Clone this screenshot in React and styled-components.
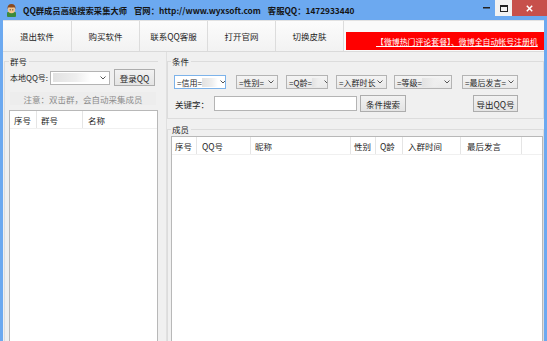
import React from 'react';
import styled, {createGlobalStyle} from 'styled-components';

const GlobalStyle = createGlobalStyle`
  html, body { margin: 0; padding: 0; overflow: hidden; background: #f0f0f0; }
  body {
    font-family: "Noto Sans CJK SC", "Microsoft YaHei", sans-serif;
    font-size: 8.5px;
    color: #1e1e1e;
  }
`;

const Window = styled.div`
  width: 547px;
  height: 360px;
  display: flex;
  flex-direction: column;
  background: #6ca9f0;
  overflow: hidden;
`;

const TitleBar = styled.div`
  height: 20px;
  display: flex;
  align-items: flex-start;
  flex: none;
`;

const TitleIcon = styled.svg`
  width: 13px;
  height: 14px;
  margin: 3px 0 0 5px;
`;

const TitleText = styled.div`
  display: flex;
  height: 20px;
  align-items: center;
  margin-left: 5px;
  font-size: 8.3px;
  font-weight: bold;
  color: #151515;
  white-space: nowrap;
  span + span { margin-left: ${p => p.gap || 6}px; }
`;

const Spacer = styled.div`
  flex: 1;
`;

const CtrlButton = styled.div`
  width: ${p => p.w}px;
  height: 16px;
  display: flex;
  align-items: center;
  justify-content: center;
  background: ${p => p.bg || 'transparent'};
  color: ${p => p.fg || '#222'};
`;

const Frame = styled.div`
  flex: 1;
  display: flex;
  flex-direction: column;
  border-left: 3px solid #6ca9f0;
  border-right: 3px solid #6ca9f0;
  background: #f0f0f0;
  min-height: 0;
`;

const Toolbar = styled.div`
  height: 32px;
  display: flex;
  flex: none;
  border-top: 1px solid #e2e2e2;
  border-bottom: 1px solid #dadada;
  box-sizing: border-box;
  background: #fafafa;
`;

const ToolButton = styled.div`
  width: ${p => p.w}px;
  flex: none;
  display: flex;
  align-items: center;
  justify-content: center;
  border-right: 1px solid #dcdcdc;
  box-sizing: border-box;
  background: linear-gradient(#fcfcfc, #f2f2f2);
  font-size: 8.5px;
`;

const Banner = styled.div`
  flex: 1;
  margin: 11px 0 0 2px;
  height: 18px;
  background: #ff0000;
  display: flex;
  align-items: center;
  padding-left: 30px;
  overflow: hidden;
  white-space: nowrap;
  color: #fff;
  text-decoration: underline;
  font-size: 7.9px;
`;

const Main = styled.div`
  flex: 1;
  display: flex;
  min-height: 0;
`;

const LeftCol = styled.div`
  width: 155px;
  flex: none;
  display: flex;
  flex-direction: column;
  padding: 3px 0 0 1px;
  box-sizing: border-box;
`;

const Splitter = styled.div`
  width: 9px;
  flex: none;
  border-right: 1px solid #e0e0e0;
  box-sizing: border-box;
`;

const RightCol = styled.div`
  flex: 1;
  display: flex;
  flex-direction: column;
  padding: 3px 0 0 0;
  min-width: 0;
`;

const Group = styled.div`
  display: flex;
  flex-direction: column;
  flex: ${p => (p.grow ? 1 : 'none')};
  margin-top: ${p => p.mt || 0}px;
  min-height: 0;
`;

const GroupHead = styled.div`
  height: 12px;
  display: flex;
  align-items: center;
  line-height: 12px;
  &::before {
    content: '';
    width: ${p => p.indent}px;
    height: 6px;
    align-self: flex-end;
    border-top: 1px solid #dcdcdc;
    border-left: 1px solid #dcdcdc;
    box-sizing: border-box;
    margin-right: 1px;
  }
  &::after {
    content: '';
    flex: 1;
    height: 6px;
    align-self: flex-end;
    border-top: 1px solid #dcdcdc;
    border-right: ${p => (p.noRight ? 'none' : '1px solid #dcdcdc')};
    box-sizing: border-box;
    margin-left: 2px;
  }
`;

const GroupBody = styled.div`
  flex: 1;
  display: flex;
  flex-direction: column;
  border: 1px solid #dcdcdc;
  border-top: none;
  border-right: ${p => (p.noRight ? 'none' : '1px solid #dcdcdc')};
  padding: ${p => p.pad};
  min-height: 0;
`;

const Row = styled.div`
  display: flex;
  align-items: center;
  height: ${p => p.h}px;
  margin-top: ${p => p.mt || 0}px;
  flex: none;
`;

const Label = styled.span`
  margin-left: ${p => p.ml || 0}px;
  width: ${p => (p.w ? p.w + 'px' : 'auto')};
  flex: none;
  white-space: nowrap;
  font-size: ${p => p.size || 8.5}px;
`;

const Select = styled.div`
  width: ${p => p.w}px;
  height: ${p => p.h || 14}px;
  margin-left: ${p => p.ml || 0}px;
  flex: none;
  display: flex;
  align-items: center;
  box-sizing: border-box;
  border: 1px solid ${p => (p.focus ? '#7db3ea' : '#b4b4b4')};
  background: ${p => (p.plain ? '#fff' : 'linear-gradient(#f4f4f4, #e8e8e8)')};
  padding: 0 3px 0 2px;
  overflow: hidden;
  white-space: nowrap;
  font-size: 8px;
`;

const Blur = styled.span`
  width: ${p => p.w}px;
  height: 9px;
  flex: none;
  background: linear-gradient(to right, #e2e2e2, #eeeeee 60%, rgba(255, 255, 255, 0));
`;

const Chevron = styled.svg`
  width: 6px;
  height: 4px;
  margin-left: auto;
  padding-left: 2px;
  flex: none;
`;

const Button = styled.div`
  width: ${p => p.w}px;
  height: ${p => p.h}px;
  margin-left: ${p => p.ml || 0}px;
  flex: none;
  display: flex;
  align-items: center;
  justify-content: center;
  box-sizing: border-box;
  border: 1px solid #adadad;
  background: linear-gradient(#f2f2f2, #e4e4e4);
  white-space: nowrap;
`;

const TextInput = styled.div`
  width: ${p => p.w}px;
  height: 15px;
  margin-left: ${p => p.ml || 0}px;
  flex: none;
  box-sizing: border-box;
  border: 1px solid #b4b4b4;
  background: #fff;
`;

const Note = styled.div`
  height: 13px;
  margin: 6px 2px 0 1px;
  display: flex;
  align-items: center;
  justify-content: center;
  color: #8c8c8c;
  background: #ededed;
  flex: none;
`;

const ListView = styled.div`
  flex: 1;
  margin-top: ${p => p.mt || 0}px;
  border: 1px solid #b8b8b8;
  background: #fff;
  display: flex;
  flex-direction: column;
  min-height: 0;
`;

const HeaderRow = styled.div`
  height: 17px;
  display: flex;
  flex: none;
  border-bottom: 1px solid #f0f0f0;
`;

const HeaderCell = styled.div`
  width: ${p => (p.w ? p.w + 'px' : 'auto')};
  flex: ${p => (p.w ? 'none' : 1)};
  display: flex;
  align-items: center;
  padding-left: ${p => p.pl || 4}px;
  box-sizing: border-box;
  border-right: ${p => (p.w ? '1px solid #e5e5e5' : 'none')};
  white-space: nowrap;
`;

function Arrow() {
  return (
    <Chevron viewBox="0 0 6 4">
      <polyline points="0.5,0.5 3,3 5.5,0.5" fill="none" stroke="#555" strokeWidth="1" />
    </Chevron>
  );
}

function Combo({w, text, blur, focus, plain, ml, h}) {
  return (
    <Select w={w} focus={focus} plain={plain} ml={ml} h={h}>
      {text && <span>{text}</span>}
      {blur ? <Blur w={blur} /> : null}
      <Arrow />
    </Select>
  );
}

const tools = [
  {label: '退出软件', w: 69},
  {label: '购买软件', w: 68},
  {label: '联系QQ客服', w: 68},
  {label: '打开官网', w: 68},
  {label: '切换皮肤', w: 68},
];

const groupCols = [
  {label: '序号', w: 27},
  {label: '群号', w: 46},
  {label: '名称', pl: 5},
];

const memberCols = [
  {label: '序号', w: 25, pl: 3},
  {label: 'QQ号', w: 54, pl: 5},
  {label: '昵称', w: 100},
  {label: '性别', w: 25, pl: 3},
  {label: 'Q龄', w: 27},
  {label: '入群时间', w: 58, pl: 5},
  {label: '最后发言', w: 61, pl: 6},
  {label: ''},
];

export default function App() {
  return (
    <>
      <GlobalStyle />
      <Window>
        <TitleBar>
          <TitleIcon viewBox="0 0 13 14">
            <rect x="2" y="9" width="9" height="5" rx="1" fill="#3c8a3c" />
            <ellipse cx="6.5" cy="6.5" rx="3.6" ry="3.8" fill="#f4c48e" />
            <path d="M2.4 6 Q2.4 1 6.5 1 Q10.6 1 10.6 6 L9.4 4.2 Q6.5 5 3.6 4.2 Z" fill="#8a4a1e" />
            <circle cx="5.2" cy="6.8" r="0.6" fill="#222" />
            <circle cx="7.8" cy="6.8" r="0.6" fill="#222" />
          </TitleIcon>
          <TitleText gap={7}>
            <span>QQ群成员高级搜索采集大师</span>
            <span>官网：http://www.wyxsoft.com</span>
            <span>客服QQ：1472933440</span>
          </TitleText>
          <Spacer />
          <CtrlButton w={17}>
            <svg width="7" height="2" viewBox="0 0 7 2"><rect width="7" height="1.5" fill="#222" /></svg>
          </CtrlButton>
          <CtrlButton w={17} bg="#f2f2f2">
            <svg width="8" height="7" viewBox="0 0 8 7">
              <rect x="0.5" y="0.5" width="7" height="6" fill="none" stroke="#222" strokeWidth="1" />
              <rect x="0.5" y="0.5" width="7" height="1.5" fill="#222" />
            </svg>
          </CtrlButton>
          <CtrlButton w={35} bg="#c7504b" fg="#fff">
            <svg width="7" height="7" viewBox="0 0 7 7">
              <path d="M0.8 0.8 L6.2 6.2 M6.2 0.8 L0.8 6.2" stroke="#fff" strokeWidth="1.5" />
            </svg>
          </CtrlButton>
        </TitleBar>
        <Frame>
          <Toolbar>
            {tools.map(t => (
              <ToolButton key={t.label} w={t.w}>{t.label}</ToolButton>
            ))}
            <Banner>【微博热门评论套餐】、微博全自动帐号注册机</Banner>
          </Toolbar>
          <Main>
            <LeftCol>
              <Group grow>
                <GroupHead indent={5} noRight>群号</GroupHead>
                <GroupBody pad="2px 0 0 4px" noRight>
                  <Row h={17}>
                    <Label ml={1} w={40} size={8}>本地QQ号:</Label>
                    <Combo w={60} blur={38} plain />
                    <Button w={41} h={17} ml={4}>登录QQ</Button>
                  </Row>
                  <Note>注意：双击群，会自动采集成员</Note>
                  <ListView mt={5}>
                    <HeaderRow>
                      {groupCols.map(c => (
                        <HeaderCell key={c.label} w={c.w} pl={c.pl}>{c.label}</HeaderCell>
                      ))}
                    </HeaderRow>
                  </ListView>
                </GroupBody>
              </Group>
            </LeftCol>
            <Splitter />
            <RightCol>
              <Group>
                <GroupHead indent={4}>条件</GroupHead>
                <GroupBody pad="8px 0 6px 3px">
                  <Row h={14}>
                    <Combo w={52} ml={3} text="=信用=" blur={16} focus plain />
                    <Combo w={42} ml={10} text="=性别=" />
                    <Combo w={42} ml={8} text="=Q龄=" blur={10} />
                    <Combo w={51} ml={8} text="=入群时长" />
                    <Combo w={58} ml={7} text="=等级=" blur={20} />
                    <Combo w={56} ml={10} text="=最后发言=" />
                  </Row>
                  <Row h={17} mt={6}>
                    <Label ml={4} w={39}>关键字：</Label>
                    <TextInput w={143} />
                    <Button w={46} h={17} ml={3}>条件搜索</Button>
                    <Button w={45} h={17} ml={67}>导出QQ号</Button>
                  </Row>
                </GroupBody>
              </Group>
              <Group grow mt={4}>
                <GroupHead indent={4}>成员</GroupHead>
                <GroupBody pad="1px 0 0 3px">
                  <ListView>
                    <HeaderRow>
                      {memberCols.map((c, i) => (
                        <HeaderCell key={i} w={c.w} pl={c.pl}>{c.label}</HeaderCell>
                      ))}
                    </HeaderRow>
                  </ListView>
                </GroupBody>
              </Group>
            </RightCol>
          </Main>
        </Frame>
      </Window>
    </>
  );
}
